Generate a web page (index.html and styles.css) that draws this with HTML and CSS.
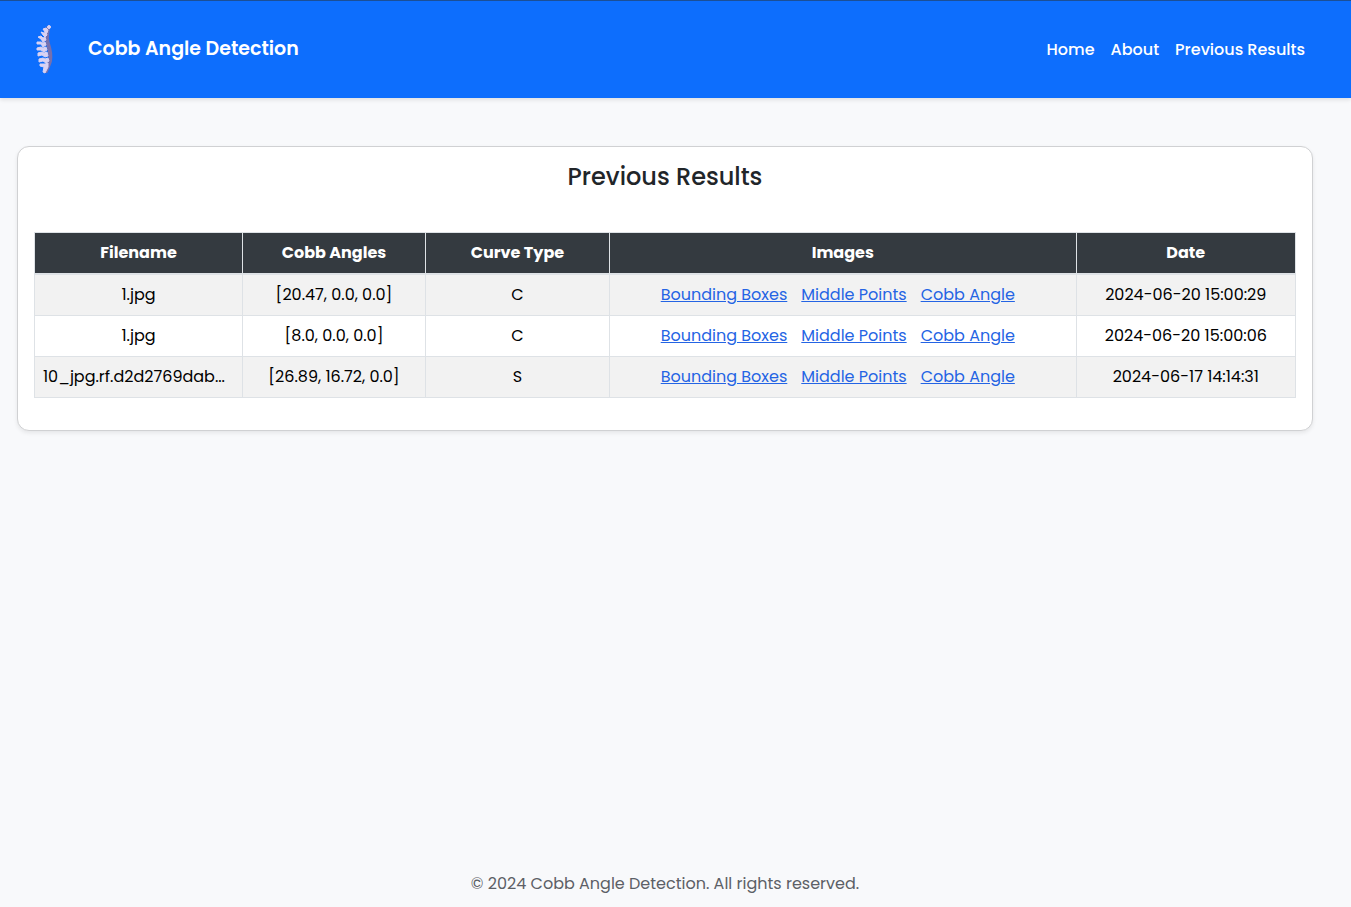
FILE: index.html
```html
<!DOCTYPE html>
<html lang="en">
<head>
<meta charset="utf-8">
<meta name="viewport" content="width=device-width, initial-scale=1">
<title>Cobb Angle Detection</title>
<link rel="stylesheet" href="styles.css">
</head>
<body>
<header class="navbar">
  <a class="brand" href="#">
    <svg class="brand-logo" viewBox="0 0 50 50" aria-hidden="true">
      <path d="M29 4C28 10 27 14 29 20C31 26 32 31 31 37C30 41 28 44 27 47" fill="none" stroke="#7670ae" stroke-width="4" stroke-linecap="round"/>
      <g fill="#d9d2f3" stroke="#d9d2f3" stroke-width="1" stroke-linejoin="round">
        <circle cx="30" cy="3" r="1.5"/>
        <path d="M24 5l3-1l2 2l-1 3l-2-1z"/>
        <path d="M22 8l3 1l2-1l1 3l-2 2l-2-2z"/>
        <path d="M19 13l3-1l2 2l2-1l1 3l-3 2l-2-3z"/>
        <path d="M18 18l4 0l2 1l2-1l1 3l-3 2l-2-3l-4 0z"/>
        <path d="M18 24l4-1l2 1l3-1l1 3l-3 2l-3-2l-4 0z"/>
        <path d="M19 29l4-1l2 1l3-1l1 4l-3 1l-3-2l-4 1z"/>
        <path d="M20 35l4-1l2 1l3-1l1 3l-3 2l-3-2l-4 1z"/>
        <path d="M21 40l5 0l3-1l0 4l-3 6l-2-1l1-5l-4-1z"/>
      </g>
    </svg>
    <span class="brand-name">Cobb Angle Detection</span>
  </a>
  <nav class="nav-links">
    <a href="#">Home</a>
    <a href="#">About</a>
    <a href="#">Previous Results</a>
  </nav>
</header>
<main class="content">
  <section class="card">
    <h1 class="card-title">Previous Results</h1>
    <table class="results">
      <colgroup>
        <col class="col-file"><col class="col-angles"><col class="col-curve"><col class="col-images"><col class="col-date">
      </colgroup>
      <thead>
        <tr><th>Filename</th><th>Cobb Angles</th><th>Curve Type</th><th>Images</th><th>Date</th></tr>
      </thead>
      <tbody>
        <tr>
          <td>1.jpg</td><td>[20.47, 0.0, 0.0]</td><td>C</td>
          <td><div class="image-links"><a href="#">Bounding Boxes</a><a href="#">Middle Points</a><a href="#">Cobb Angle</a></div></td>
          <td>2024-06-20 15:00:29</td>
        </tr>
        <tr>
          <td>1.jpg</td><td>[8.0, 0.0, 0.0]</td><td>C</td>
          <td><div class="image-links"><a href="#">Bounding Boxes</a><a href="#">Middle Points</a><a href="#">Cobb Angle</a></div></td>
          <td>2024-06-20 15:00:06</td>
        </tr>
        <tr>
          <td class="clipped">10_jpg.rf.d2d2769dab...</td><td>[26.89, 16.72, 0.0]</td><td>S</td>
          <td><div class="image-links"><a href="#">Bounding Boxes</a><a href="#">Middle Points</a><a href="#">Cobb Angle</a></div></td>
          <td>2024-06-17 14:14:31</td>
        </tr>
      </tbody>
    </table>
  </section>
</main>
<footer class="footer">© 2024 Cobb Angle Detection. All rights reserved.</footer>
</body>
</html>
```

FILE: styles.css
```css
* {
  box-sizing: border-box;
}

body {
  margin: 0;
  min-height: 100vh;
  display: flex;
  flex-direction: column;
  background: #f8f9fb;
  color: #000;
  font-family: Poppins, Inter, sans-serif;
  font-size: 16px;
  font-weight: 400;
  line-height: 24px;
}

.navbar {
  display: flex;
  align-items: center;
  justify-content: space-between;
  padding: 23px 46px 24px 19px;
  border-top: 1px solid #1b4f96;
  background: #0d6efd;
  box-shadow: 0 2px 4px rgba(0, 0, 0, 0.1);
}

.brand {
  display: flex;
  align-items: center;
  gap: 19px;
  color: #fff;
  text-decoration: none;
}

.brand-logo {
  width: 50px;
  height: 50px;
}

.brand-name {
  font-size: 19px;
  font-weight: 600;
}

.nav-links {
  display: flex;
  gap: 16px;
  padding-top: 2px;
}

.nav-links a {
  color: #fff;
  font-weight: 500;
  text-decoration: none;
}

.content {
  flex: 1;
  padding: 48px 38px 48px 17px;
}

.card {
  padding: 16px 16px 32px;
  border: 1px solid #d0d1d3;
  border-radius: 12px;
  background: #fff;
  box-shadow: 0 2px 4px rgba(0, 0, 0, 0.08);
}

.card-title {
  margin: 0 0 42px;
  color: #212529;
  font-size: 24px;
  font-weight: 500;
  line-height: 27px;
  text-align: center;
}

.results {
  width: 100%;
  table-layout: fixed;
  border-collapse: collapse;
  text-align: center;
}

.col-file { width: 16.5%; }
.col-angles { width: 14.5%; }
.col-curve { width: 14.6%; }
.col-images { width: 37%; }
.col-date { width: 17.4%; }

.results th,
.results td {
  padding: 8px;
  border: 1px solid #dee2e6;
  white-space: nowrap;
}

.results th {
  border-bottom-width: 2px;
  background: #343a40;
  color: #fff;
  font-weight: 700;
}

.results tbody tr:nth-child(odd) {
  background: #f2f2f2;
}

.results .clipped {
  overflow: hidden;
  text-align: left;
}

.image-links {
  display: flex;
  justify-content: center;
  gap: 14px;
  padding-right: 10px;
}

.image-links a {
  color: #2464e4;
}

.footer {
  padding: 12px 38px 11px 17px;
  color: #5c6066;
  text-align: center;
}
```
